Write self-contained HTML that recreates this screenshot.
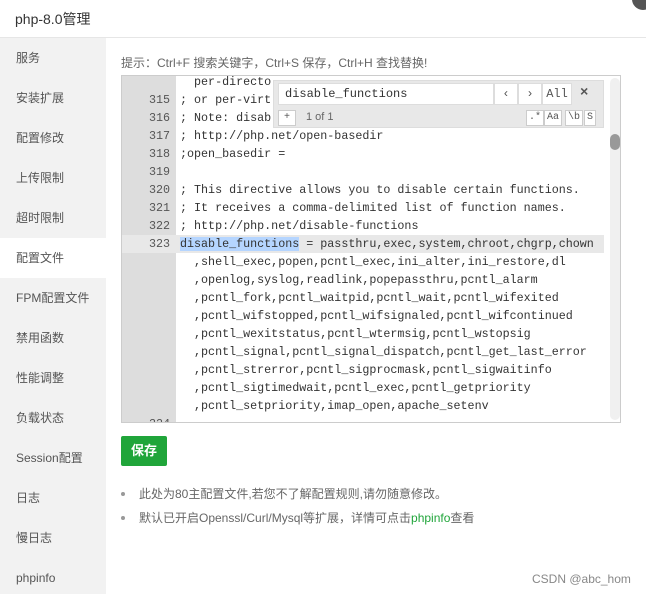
<!DOCTYPE html>
<html><head><meta charset="utf-8"><style>
*{margin:0;padding:0;box-sizing:border-box}
body{width:646px;height:594px;overflow:hidden;background:#fff;font-family:"Liberation Sans","Noto Sans CJK SC",sans-serif;position:relative;color:#333}
.hdr{position:absolute;left:0;top:0;width:646px;height:38px;border-bottom:1px solid #e6e6e6;background:#fff;font-size:14px;line-height:38px;padding-left:15px;color:#333}
.close{position:absolute;left:632px;top:-12px;width:22px;height:22px;border-radius:50%;background:#555}
.side{position:absolute;left:0;top:38px;width:106px;height:556px;background:#f2f2f2}
.side div{height:40px;line-height:40px;padding-left:16px;font-size:12px;color:#555}
.side .on{background:#fff}
.tip{position:absolute;left:121px;top:54px;font-size:12px;color:#666}
.ed{position:absolute;left:121px;top:75px;width:500px;height:348px;border:1px solid #ccc;overflow:hidden;background:#fff}
.gut{position:absolute;left:0;top:0;width:54px;height:100%;background:#ddd}
.code{position:absolute;left:0;top:-3px;font-family:"Liberation Mono","DejaVu Sans Mono",monospace;font-size:11.7px;color:#333}
.l{height:18px;line-height:18px;white-space:pre;position:relative}
.n{display:inline-block;width:48px;text-align:right;color:#555}
.t{position:absolute;left:58px;top:0}
.act{background:#e8e8e8;width:482px}
.sel{background:#b5d5ff}
.sb{position:absolute;left:488px;top:2px;width:10px;height:342px;background:#f0f0f0;border-radius:5px}
.th{position:absolute;left:488px;top:58px;width:10px;height:16px;background:#999;border-radius:5px}
.sp{position:absolute;left:273px;top:80px;width:331px;height:48px;background:#e8e8e8;border:1px solid #ddd;font-family:"Liberation Mono",monospace;font-size:12px}
.in{position:absolute;left:4px;top:2px;width:216px;height:22px;background:#fff;border:1px solid #ddd;padding-left:6px;line-height:20px}
.b{position:absolute;top:2px;height:22px;background:#fff;border:1px solid #ddd;text-align:center;line-height:20px;color:#555}
.sm{position:absolute;top:29px;height:16px;background:#fff;border:1px solid #ccc;font-size:10px;line-height:14px;padding:0 2px;color:#555}
.btn{position:absolute;left:121px;top:436px;width:46px;height:30px;background:#20a53a;color:#fff;font-size:13px;font-weight:bold;text-align:center;line-height:30px;border-radius:2px}
ul{position:absolute;left:121px;top:484px;list-style:none;font-size:12px;color:#666}
li{height:24px;line-height:20px;padding-left:18px;position:relative}
li:before{content:"";position:absolute;left:0;top:8px;width:4px;height:4px;border-radius:50%;background:#999}
.wm{position:absolute;left:532px;top:572px;font-size:12px;color:#888}
</style></head><body>
<div class="hdr">php-8.0管理</div><div class="close"></div>
<div class="side"><div>服务</div><div>安装扩展</div><div>配置修改</div><div>上传限制</div><div>超时限制</div><div class="on">配置文件</div><div>FPM配置文件</div><div>禁用函数</div><div>性能调整</div><div>负载状态</div><div>Session配置</div><div>日志</div><div>慢日志</div><div>phpinfo</div></div>
<div class="tip">提示：Ctrl+F 搜索关键字，Ctrl+S 保存，Ctrl+H 查找替换!</div>
<div class="ed"><div class="gut"></div>
<div class="code">
<div class="l"><span class="n"></span><span class="t">  per-directo</span></div>
<div class="l"><span class="n">315</span><span class="t">; or per-virt</span></div>
<div class="l"><span class="n">316</span><span class="t">; Note: disab</span></div>
<div class="l"><span class="n">317</span><span class="t">; http://php.net/open-basedir</span></div>
<div class="l"><span class="n">318</span><span class="t">;open_basedir =</span></div>
<div class="l"><span class="n">319</span><span class="t"></span></div>
<div class="l"><span class="n">320</span><span class="t">; This directive allows you to disable certain functions.</span></div>
<div class="l"><span class="n">321</span><span class="t">; It receives a comma-delimited list of function names.</span></div>
<div class="l"><span class="n">322</span><span class="t">; http://php.net/disable-functions</span></div>
<div class="l act"><span class="n">323</span><span class="t"><span class="sel">disable_functions</span> = passthru,exec,system,chroot,chgrp,chown</span></div>
<div class="l"><span class="t">  ,shell_exec,popen,pcntl_exec,ini_alter,ini_restore,dl</span></div>
<div class="l"><span class="t">  ,openlog,syslog,readlink,popepassthru,pcntl_alarm</span></div>
<div class="l"><span class="t">  ,pcntl_fork,pcntl_waitpid,pcntl_wait,pcntl_wifexited</span></div>
<div class="l"><span class="t">  ,pcntl_wifstopped,pcntl_wifsignaled,pcntl_wifcontinued</span></div>
<div class="l"><span class="t">  ,pcntl_wexitstatus,pcntl_wtermsig,pcntl_wstopsig</span></div>
<div class="l"><span class="t">  ,pcntl_signal,pcntl_signal_dispatch,pcntl_get_last_error</span></div>
<div class="l"><span class="t">  ,pcntl_strerror,pcntl_sigprocmask,pcntl_sigwaitinfo</span></div>
<div class="l"><span class="t">  ,pcntl_sigtimedwait,pcntl_exec,pcntl_getpriority</span></div>
<div class="l"><span class="t">  ,pcntl_setpriority,imap_open,apache_setenv</span></div>
<div class="l"><span class="n">324</span></div>
</div>
<div class="sb"></div><div class="th"></div>
</div>
<div class="sp"><div class="in">disable_functions</div>
<div class="b" style="left:220px;width:24px">‹</div><div class="b" style="left:244px;width:24px">›</div><div class="b" style="left:268px;width:30px">All</div>
<div style="position:absolute;left:306px;top:4px;font-size:14px;font-weight:bold;color:#555">×</div>
<div class="sm" style="left:4px;width:18px;text-align:center">+</div>
<div style="position:absolute;left:32px;top:30px;font-family:'Liberation Sans';font-size:11px;color:#666">1 of 1</div>
<div class="sm" style="left:252px">.*</div><div class="sm" style="left:270px">Aa</div><div class="sm" style="left:291px">\b</div><div class="sm" style="left:310px">S</div>
</div>
<div class="btn">保存</div>
<ul><li>此处为80主配置文件,若您不了解配置规则,请勿随意修改。</li><li>默认已开启Openssl/Curl/Mysql等扩展，详情可点击<span style="color:#20a53a">phpinfo</span>查看</li></ul>
<div class="wm">CSDN @abc_hom</div>
</body></html>
